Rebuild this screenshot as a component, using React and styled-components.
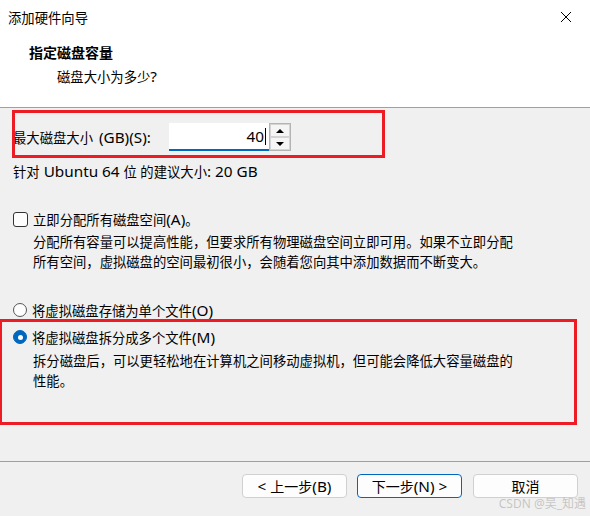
import React from 'react';
import styled, { createGlobalStyle } from 'styled-components';

const GlobalStyle = createGlobalStyle`
  html, body {
    margin: 0;
    padding: 0;
    background: #f0f0f0;
  }
  body {
    font-family: "Noto Sans", "Noto Sans CJK SC", sans-serif;
    color: #000;
  }
`

const Window = styled.div`
  position: relative;
  width: 590px;
  height: 516px;
  display: flex;
  flex-direction: column;
  background: #f0f0f0;
  overflow: hidden;
  font-size: 13.33px;
`

// latin runs render a bit larger than the CJK glyphs in the original
const Lat = styled.span`
  font-size: 15.3px;
  margin-left: ${props => props.gap || 0}px;
`

const TitleBar = styled.div`
  height: 34px;
  display: flex;
  align-items: center;
  justify-content: space-between;
  padding: 0 18px 0 8px;
  background: #fff;
  font-size: 13.33px;
`

const Header = styled.div`
  height: 73px;
  background: #fff;
  display: flex;
  flex-direction: column;
  padding-left: 29px;
  border-bottom: 1px solid #a0a0a0;
`

const HeaderTitle = styled.div`
  margin-top: 9px;
  font-size: 14px;
  font-weight: bold;
  line-height: 20px;
`

const HeaderSub = styled.div`
  margin-top: 3px;
  padding-left: 28px;
  line-height: 20px;
`

const Body = styled.div`
  flex: 1;
  display: flex;
  flex-direction: column;
  padding-left: 13px;
`

const SizeRow = styled.div`
  margin-top: 15px;
  height: 28px;
  display: flex;
  align-items: center;
`

const SizeLabel = styled.div`
  width: 156px;
  white-space: nowrap;
`

const NumberBox = styled.div`
  width: 100px;
  height: 28px;
  box-sizing: border-box;
  background: #fff;
  border-bottom: 2px solid #0067c0;
  display: flex;
  align-items: center;
  justify-content: flex-end;
  padding-right: 3px;
  font-size: 15.3px;
`

const Caret = styled.span`
  display: inline-block;
  width: 1px;
  height: 17px;
  background: #000;
  margin-left: 1px;
`

const Spinner = styled.div`
  width: 22px;
  height: 28px;
  box-sizing: border-box;
  border: 1px solid #b4b4b4;
  display: flex;
  flex-direction: column;
  background: #f0f0f0;
`

const SpinButton = styled.div`
  flex: 1;
  display: flex;
  align-items: center;
  justify-content: center;
  border: 1px solid #d4d4d4;
  background: #f5f5f5;
`

const Arrow = styled.div`
  width: 0;
  height: 0;
  border-left: 4px solid transparent;
  border-right: 4px solid transparent;
  ${props => props.down
    ? 'border-top: 4px solid #000;'
    : 'border-bottom: 4px solid #000;'}
`

const Hint = styled.div`
  margin-top: 10px;
  line-height: 20px;
  height: 20px;
`

const OptionRow = styled.div`
  margin-top: ${props => props.gap}px;
  height: 20px;
  display: flex;
  align-items: center;
  gap: 5px;
`

const CheckBox = styled.div`
  width: 13px;
  height: 13px;
  border: 1px solid #333;
  border-radius: 3px;
  background: #fdfdfd;
`

const Radio = styled.div`
  width: 12px;
  height: 12px;
  border-radius: 50%;
  box-sizing: content-box;
  display: flex;
  align-items: center;
  justify-content: center;
  ${props => props.checked
    ? 'background: #0067c0; border: 1px solid #0067c0;'
    : 'background: #fdfdfd; border: 1px solid #555;'}
`

const Dot = styled.div`
  width: 5px;
  height: 5px;
  border-radius: 50%;
  background: #fff;
`

const Desc = styled.div`
  margin-top: ${props => props.gap}px;
  padding-left: 20px;
  line-height: 19.5px;
`

const Footer = styled.div`
  height: 42px;
  border-top: 1px solid #a0a0a0;
  display: flex;
  justify-content: flex-end;
  align-items: flex-start;
  padding: 12px 12px 0 0;
  gap: 10px;
`

const Button = styled.div`
  width: 105px;
  height: 24px;
  box-sizing: border-box;
  border: 1px solid ${props => props.primary ? '#0067c0' : '#d0d0d0'};
  border-radius: 4px;
  background: #fdfdfd;
  display: flex;
  align-items: center;
  justify-content: center;
  font-size: 14px;
  margin-left: ${props => props.extra ? 1 : 0}px;
`

const Mark = styled.div`
  position: absolute;
  border: 3px solid #ed1c24;
  pointer-events: none;
`

const Watermark = styled.div`
  position: absolute;
  right: 4px;
  bottom: 4px;
  font-size: 12px;
  color: rgba(160, 160, 160, 0.55);
`

const CloseIcon = () => (
  <svg width="12" height="12" viewBox="0 0 12 12">
    <path d="M1 1 L11 11 M11 1 L1 11" stroke="#000" strokeWidth="1" />
  </svg>
)

const App = () => {
  return (
    <>
      <GlobalStyle />
      <Window>
        <TitleBar>
          <span>添加硬件向导</span>
          <CloseIcon />
        </TitleBar>
        <Header>
          <HeaderTitle>指定磁盘容量</HeaderTitle>
          <HeaderSub>磁盘大小为多少<Lat>?</Lat></HeaderSub>
        </Header>
        <Body>
          <SizeRow>
            <SizeLabel>最大磁盘大小<Lat gap={2}> (GB)(S):</Lat></SizeLabel>
            <NumberBox>40<Caret /></NumberBox>
            <Spinner>
              <SpinButton><Arrow /></SpinButton>
              <SpinButton><Arrow down /></SpinButton>
            </Spinner>
          </SizeRow>
          <Hint>针对<Lat> Ubuntu 64 </Lat>位 的建议大小<Lat>: 20 GB</Lat></Hint>
          <OptionRow gap={28}>
            <CheckBox />
            <span>立即分配所有磁盘空间<Lat>(A)</Lat>。</span>
          </OptionRow>
          <Desc gap={4}>
            分配所有容量可以提高性能，但要求所有物理磁盘空间立即可用。如果不立即分配<br />
            所有空间，虚拟磁盘的空间最初很小，会随着您向其中添加数据而不断变大。
          </Desc>
          <OptionRow gap={28}>
            <Radio />
            <span>将虚拟磁盘存储为单个文件<Lat>(O)</Lat></span>
          </OptionRow>
          <OptionRow gap={7}>
            <Radio checked><Dot /></Radio>
            <span>将虚拟磁盘拆分成多个文件<Lat>(M)</Lat></span>
          </OptionRow>
          <Desc gap={5}>
            拆分磁盘后，可以更轻松地在计算机之间移动虚拟机，但可能会降低大容量磁盘的<br />
            性能。
          </Desc>
        </Body>
        <Footer>
          <Button><Lat>&lt;&nbsp;</Lat>上一步<Lat>(B)</Lat></Button>
          <Button primary>下一步<Lat>(N) &gt;</Lat></Button>
          <Button extra>取消</Button>
        </Footer>
        <Mark style={{ left: 12, top: 110, width: 367, height: 42 }} />
        <Mark style={{ left: -1, top: 319, width: 572, height: 100 }} />
        <Watermark>CSDN @吴_知遇</Watermark>
      </Window>
    </>
  );
}

export default App;
